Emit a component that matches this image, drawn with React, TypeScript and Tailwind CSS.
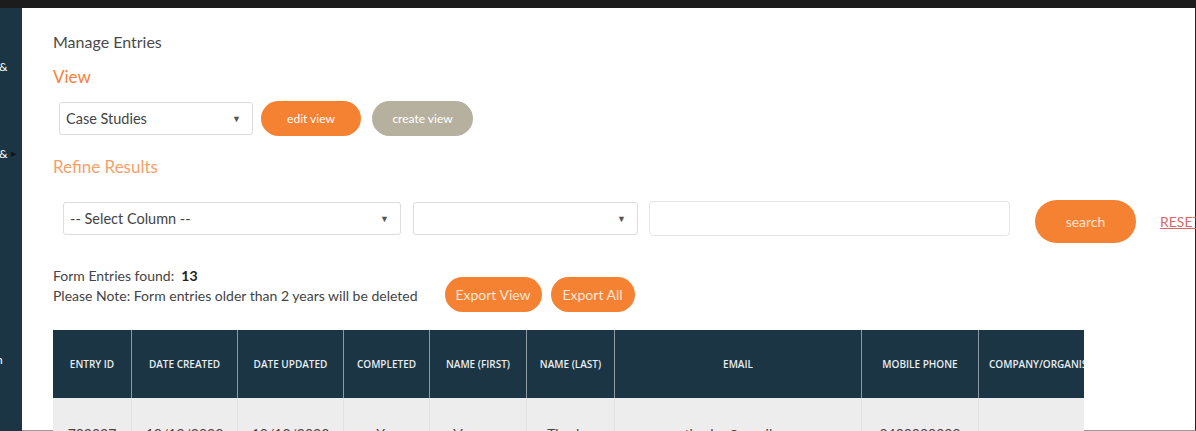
import React from 'react';

const columns = [
  { label: 'ENTRY ID', w: 'w-[78px]' },
  { label: 'DATE CREATED', w: 'w-[106px]' },
  { label: 'DATE UPDATED', w: 'w-[106px]' },
  { label: 'COMPLETED', w: 'w-[86px]' },
  { label: 'NAME (FIRST)', w: 'w-[97px]' },
  { label: 'NAME (LAST)', w: 'w-[88px]' },
  { label: 'EMAIL', w: 'w-[247px]' },
  { label: 'MOBILE PHONE', w: 'w-[117px]' },
  { label: 'COMPANY/ORGANISATION', w: 'w-[106px]' },
];

const row = ['702027', '10/12/2023', '10/12/2023', 'Yes', 'Vanessa', 'Thorley', 'v.thorley@email.com', '0400000000', ''];

function Caret() {
  return <span className="text-[9px] text-[#555]">▼</span>;
}

function Select({ value, className }: { value?: string; className: string }) {
  return (
    <div
      className={`flex shrink-0 items-center justify-between rounded-[3px] border border-[#dcdcdc] bg-white pl-[6px] pr-[11px] text-[14.5px] text-[#444] ${className}`}
    >
      <span>{value}</span>
      <Caret />
    </div>
  );
}

export default function App() {
  return (
    <div
      className="flex h-[431px] w-[1196px] flex-col overflow-hidden bg-white"
      style={{ fontFamily: 'Lato, "Open Sans", sans-serif' }}
    >
      <div className="h-[8px] shrink-0 bg-[#1c1c1c]" />
      <div className="flex min-h-0 flex-1">
        {/* sidebar */}
        <div className="relative w-[22px] shrink-0 bg-[#1b3545] text-[12px] text-white">
          <span className="absolute left-[-1px] top-[50px]">&amp;</span>
          <span className="absolute left-[-1px] top-[137px]">&amp;</span>
          <span className="absolute left-[11px] top-[140px] text-[7px] text-[#111]">▶</span>
          <span className="absolute left-[-4px] top-[343px]">n</span>
        </div>

        {/* main */}
        <div className="min-w-0 flex-1 border-b border-r border-b-[#9a9a9a] border-r-[#222] pl-[31px] pt-[24px] text-[#444]">
          <div className="text-[16px] leading-[20px] text-[#4a4a4a]">Manage Entries</div>
          <div className="mt-[15px] text-[17px] leading-[20px] text-[#f5823a]">View</div>

          <div className="mt-[14px] flex items-center">
            <Select value="Case Studies" className="ml-[6px] h-[33px] w-[194px]" />
            <button className="ml-[8px] h-[35px] w-[100px] shrink-0 rounded-full bg-[#f58233] text-[12px] text-white">
              edit view
            </button>
            <button className="ml-[11px] h-[35px] w-[101px] shrink-0 rounded-full bg-[#b6b19f] text-[12px] text-white">
              create view
            </button>
          </div>

          <div className="mt-[21px] text-[17px] leading-[20px] text-[#f5a06a]">Refine Results</div>

          <div className="mt-[17px] flex items-center">
            <Select value="-- Select Column --" className="ml-[10px] h-[33px] w-[338px]" />
            <Select className="ml-[12px] h-[33px] w-[225px]" />
            <div className="ml-[11px] h-[35px] w-[361px] shrink-0 rounded-[4px] border border-[#e4e4e4] bg-white" />
            <button className="ml-[25px] mt-[6px] h-[43px] w-[101px] shrink-0 rounded-full bg-[#f58233] text-[14px] text-[#fde3d0]">
              search
            </button>
            <a className="ml-[24px] mt-[6px] text-[14px] text-[#d9686a] underline">RESET</a>
          </div>

          <div className="mt-[23px] flex items-end">
            <div className="text-[14px] leading-[20px] text-[#444]">
              <div>
                Form Entries found:&nbsp; <span className="font-bold text-[#222]">13</span>
              </div>
              <div>Please Note: Form entries older than 2 years will be deleted</div>
            </div>
            <button className="mb-[-6px] ml-[27px] h-[35px] w-[97px] shrink-0 rounded-full bg-[#f58233] text-[14px] text-[#fde8d8]">
              Export View
            </button>
            <button className="mb-[-6px] ml-[9px] h-[35px] w-[84px] shrink-0 rounded-full bg-[#f58233] text-[14px] text-[#fde8d8]">
              Export All
            </button>
          </div>

          <div className="mt-[24px] w-[1031px] overflow-hidden">
            <div className="flex h-[68px] bg-[#1b3545]">
              {columns.map((c, i) => (
                <div
                  key={c.label}
                  className={`${c.w} flex shrink-0 items-center whitespace-nowrap text-[10px] font-semibold text-[#e8edf0] ${
                    i === columns.length - 1 ? 'justify-start pl-[10px]' : 'justify-center'
                  } ${i > 0 ? 'border-l border-[#8c9aa3]' : ''}`}
                  style={{ fontFamily: '"Open Sans", sans-serif' }}
                >
                  {c.label}
                </div>
              ))}
            </div>
            <div className="flex h-[60px] bg-[#ededed]">
              {columns.map((c, i) => (
                <div
                  key={c.label}
                  className={`${c.w} flex shrink-0 justify-center whitespace-nowrap pt-[25px] text-[14px] text-[#444] ${
                    i > 0 ? 'border-l border-[#e2e2e2]' : ''
                  }`}
                >
                  {row[i]}
                </div>
              ))}
            </div>
          </div>
        </div>
      </div>
    </div>
  );
}
